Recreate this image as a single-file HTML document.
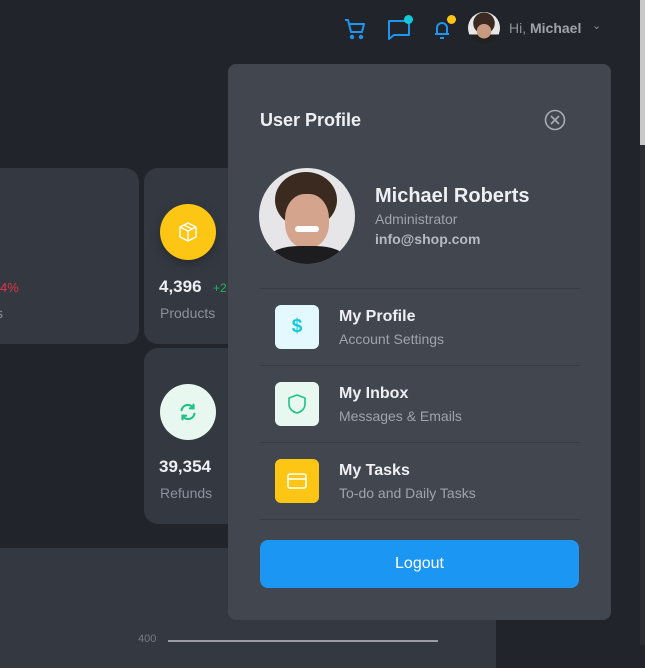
<!DOCTYPE html>
<html><head><style>
*{margin:0;padding:0;box-sizing:border-box}
html,body{margin:0}
body{width:645px;height:645px;background:#21242b;font-family:"Liberation Sans",sans-serif;position:relative;overflow:hidden}
.a{position:absolute}
.card{position:absolute;background:#343840;border-radius:14px}
.t{position:absolute;white-space:nowrap}
</style></head><body>
<div class="a" style="left:640px;top:0;width:5px;height:645px;background:#2a2d33"></div>
<div class="a" style="left:640px;top:0;width:5px;height:145px;background:#c8c8c8"></div>
<div class="card" style="left:-20px;top:168px;width:159px;height:176px"></div>
<div class="t" style="left:0;top:280px;color:#e0364a;font-size:13px">4%</div>
<div class="t" style="left:-4px;top:305px;color:#8c919b;font-size:14px">s</div>
<div class="card" style="left:144px;top:168px;width:120px;height:176px"></div>
<div class="a" style="left:160px;top:204px;width:56px;height:56px;border-radius:50%;background:#fdc614;box-shadow:0 4px 10px rgba(0,0,0,.25)"></div>
<svg class="a" style="left:176px;top:220px" width="24" height="24" viewBox="0 0 24 24" fill="none" stroke="#fff" stroke-width="1.4" stroke-linejoin="round"><path d="M12 3l8 4v10l-8 4-8-4V7z M4 7l8 4 8-4 M12 11v10 M8 5l8 4"/></svg>
<div class="t" style="left:159px;top:277px;color:#eef0f3;font-size:17px;font-weight:bold">4,396</div>
<div class="t" style="left:213px;top:281px;color:#22b35e;font-size:12px">+2</div>
<div class="t" style="left:160px;top:305px;color:#8c919b;font-size:14px">Products</div>
<div class="card" style="left:144px;top:348px;width:120px;height:176px"></div>
<div class="a" style="left:160px;top:384px;width:56px;height:56px;border-radius:50%;background:#e8f8f0"></div>
<svg class="a" style="left:177px;top:401px" width="22" height="22" viewBox="0 0 24 24" fill="none" stroke="#1fc28a" stroke-width="2.4" stroke-linecap="round"><path d="M5 10a7 7 0 0 1 13-2M19 14a7 7 0 0 1-13 2"/><path d="M18 4v4h-4M6 20v-4h4"/></svg>
<div class="t" style="left:159px;top:457px;color:#eef0f3;font-size:17px;font-weight:bold">39,354</div>
<div class="t" style="left:160px;top:485px;color:#8c919b;font-size:14px">Refunds</div>
<div class="card" style="left:-20px;top:548px;width:516px;height:120px;border-radius:0"></div>
<div class="t" style="left:138px;top:633px;color:#777b84;font-size:11px">400</div>
<div class="a" style="left:168px;top:640px;width:270px;height:2px;background:#9a9da3"></div>
<svg class="a" style="left:343px;top:18px" width="24" height="22" viewBox="0 0 24 22" fill="none" stroke="#1e96f0" stroke-width="2" stroke-linejoin="round"><path d="M2 2h3l3 12h11l2-8H7"/><circle cx="9" cy="19" r="1.2"/><circle cx="18" cy="19" r="1.2"/></svg>
<svg class="a" style="left:386px;top:18px" width="26" height="22" viewBox="0 0 26 22" fill="none" stroke="#1e96f0" stroke-width="2" stroke-linejoin="round"><path d="M3 3h20v14H8l-5 4z"/></svg>
<div class="a" style="left:404px;top:15px;width:9px;height:9px;border-radius:50%;background:#15c8d8"></div>
<svg class="a" style="left:431px;top:18px" width="22" height="22" viewBox="0 0 22 22" fill="none" stroke="#1e96f0" stroke-width="2"><path d="M4 16h14M6 16V10a5 5 0 0 1 10 0v6M9 20h4"/></svg>
<div class="a" style="left:447px;top:15px;width:9px;height:9px;border-radius:50%;background:#fdc614"></div>
<div class="a" style="left:468px;top:12px;width:32px;height:32px;border-radius:50%;background:radial-gradient(circle at 50% 60%,#c99a80 0 28%,transparent 30%),radial-gradient(circle at 50% 35%,#3a2a22 0 40%,transparent 42%),linear-gradient(#e8e8e8 70%,#222 70%)"></div>
<div class="t" style="left:509px;top:20px;color:#8c919b;font-size:14px">Hi, <b style="color:#9ea3ac">Michael</b></div>
<div class="t" style="left:592px;top:19px;color:#8c919b;font-size:11px">⌄</div>
<div class="a" style="left:228px;top:64px;width:383px;height:556px;background:#42464f;border-radius:8px"></div>
<div class="t" style="left:260px;top:110px;color:#eef0f3;font-size:18px;font-weight:bold">User Profile</div>
<svg class="a" style="left:544px;top:109px" width="22" height="22" viewBox="0 0 22 22" fill="none" stroke="#a8adb5" stroke-width="1.6"><circle cx="11" cy="11" r="9.5"/><path d="M7 7l8 8M15 7l-8 8"/></svg>
<div class="a" style="left:259px;top:168px;width:96px;height:96px;border-radius:50%;overflow:hidden;background:#e6e6e8">
 <div class="a" style="left:16px;top:4px;width:62px;height:56px;border-radius:50%;background:#3b2a20"></div>
 <div class="a" style="left:26px;top:26px;width:44px;height:54px;border-radius:45%;background:#d4a58c"></div>
 <div class="a" style="left:36px;top:58px;width:24px;height:6px;border-radius:3px;background:#fff"></div>
 <div class="a" style="left:10px;top:78px;width:76px;height:30px;border-radius:40% 40% 0 0;background:#1d1d1f"></div>
</div>
<div class="t" style="left:375px;top:185px;color:#eef0f3;font-size:20px;font-weight:bold">Michael Roberts</div>
<div class="t" style="left:375px;top:211px;color:#9ea3ac;font-size:14px">Administrator</div>
<div class="t" style="left:375px;top:231px;color:#b6bac1;font-size:14px;font-weight:bold">info@shop.com</div>
<div class="a" style="left:260px;top:288px;width:320px;height:1px;background:#373a42"></div>
<div class="a" style="left:260px;top:365px;width:320px;height:1px;background:#373a42"></div>
<div class="a" style="left:260px;top:442px;width:320px;height:1px;background:#373a42"></div>
<div class="a" style="left:260px;top:519px;width:320px;height:1px;background:#373a42"></div>
<div class="a" style="left:275px;top:305px;width:44px;height:44px;border-radius:6px;background:#e3f9fd;color:#15c8d8;font-size:19px;font-weight:bold;text-align:center;line-height:44px">$</div>
<div class="t" style="left:339px;top:308px;color:#eef0f3;font-size:16px;font-weight:bold">My Profile</div>
<div class="t" style="left:339px;top:331px;color:#9ea3ac;font-size:14px">Account Settings</div>
<div class="a" style="left:275px;top:382px;width:44px;height:44px;border-radius:6px;background:#e8f8f0"></div>
<svg class="a" style="left:286px;top:393px" width="22" height="22" viewBox="0 0 22 22" fill="none" stroke="#1fc28a" stroke-width="1.6" stroke-linejoin="round"><path d="M11 2l8 3v6c0 5-4 8-8 9-4-1-8-4-8-9V5z"/></svg>
<div class="t" style="left:339px;top:385px;color:#eef0f3;font-size:16px;font-weight:bold">My Inbox</div>
<div class="t" style="left:339px;top:408px;color:#9ea3ac;font-size:14px">Messages &amp; Emails</div>
<div class="a" style="left:275px;top:459px;width:44px;height:44px;border-radius:6px;background:#fdc614"></div>
<svg class="a" style="left:286px;top:470px" width="22" height="22" viewBox="0 0 22 22" fill="none" stroke="#fff" stroke-width="1.6"><rect x="2" y="4" width="18" height="14" rx="2"/><path d="M2 9h18"/></svg>
<div class="t" style="left:339px;top:462px;color:#eef0f3;font-size:16px;font-weight:bold">My Tasks</div>
<div class="t" style="left:339px;top:485px;color:#9ea3ac;font-size:14px">To-do and Daily Tasks</div>
<div class="a" style="left:260px;top:540px;width:319px;height:48px;border-radius:8px;background:#1b96f3;color:#fff;font-size:16px;text-align:center;line-height:48px">Logout</div>
</body></html>
